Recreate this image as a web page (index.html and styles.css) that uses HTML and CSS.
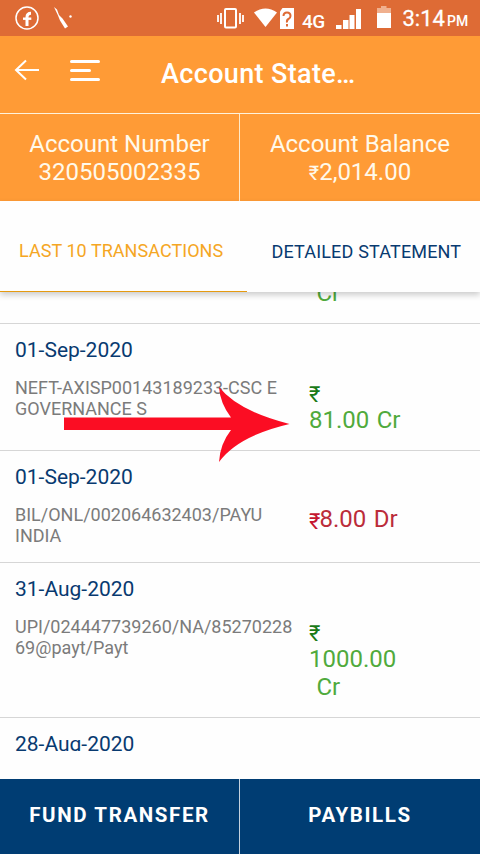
FILE: index.html
```html
<!DOCTYPE html>
<html lang="en">
<head>
<meta charset="utf-8">
<title>Account Statement</title>
<link rel="stylesheet" href="styles.css">
</head>
<body>
<div class="status">
  <svg class="status-left" width="80" height="36" viewBox="0 0 80 36">
    <circle cx="27" cy="18" r="11" fill="none" stroke="#fff" stroke-width="1.5"/>
    <path d="M27 26V17.2Q27 13.2 31 13.2" fill="none" stroke="#fff" stroke-width="3"/>
    <path d="M23 18.7H31.3" stroke="#fff" stroke-width="2.4"/>
    <path d="M54 7L57 9.5L59 15L62.500 18.500L68 26.500L65 28.500L60 20.500L58 15.500Z" fill="#fff"/>
    <circle cx="70.500" cy="16.500" r="1.200" fill="#fff"/>
  </svg>
  <svg class="status-net" width="86" height="36" viewBox="0 0 86 36">
    <rect x="9" y="9" width="11" height="18.500" rx="1" fill="none" stroke="#fff" stroke-width="2"/>
    <path d="M2 15V22M5 13V24M24 13V24M27 15V22" stroke="#fff" stroke-width="1.800"/>
    <path d="M38 12.500Q49.500 4.500 61 12.500L49.500 27Z" fill="#fff"/>
    <path d="M66.500 8H78V29H64V11.500Z" fill="#fff"/>
    <path d="M67.500 16Q67.500 12.500 71 12.500T74.500 16Q74.500 18 72.500 19T71 22.500M71 24V26.500" fill="none" stroke="#de6b35" stroke-width="2"/>
  </svg>
  <span class="lte">4G</span>
  <svg class="status-bars" width="60" height="36" viewBox="0 0 60 36">
    <path d="M0 25H5.500V29H0ZM7 20H12.500V29H7ZM13.500 15H18.500V29H13.500ZM20 9H25V29H20Z" fill="#fff"/>
    <path d="M41 8H45V6H50.500V8H55V13H41Z" fill="#f0b08e"/>
    <path d="M41 13H55V28H41Z" fill="#fff"/>
  </svg>
  <span class="clock">3:14</span><span class="meridiem">PM</span>
</div>
<header class="appbar">
  <svg class="nav" width="110" height="76" viewBox="0 0 110 76">
    <path d="M39 34H16.500M26 24.500L16 34L26 43.500" fill="none" stroke="#fff" stroke-width="2"/>
    <path d="M71.500 25.500H98.500M71.500 34.500H89.500M71.500 43.500H98.500" fill="none" stroke="#fff" stroke-width="3" stroke-linecap="round"/>
  </svg>
  <h1 class="title">Account State…</h1>
</header>
<section class="summary">
  <div class="fact"><div>Account Number</div><div>320505002335</div></div>
  <div class="fact"><div>Account Balance</div><div><span class="rupee-small">₹</span>2,014.00</div></div>
</section>
<nav class="tabs">
  <div class="tab active">LAST 10 TRANSACTIONS</div>
  <div class="tab">DETAILED STATEMENT</div>
</nav>
<main class="list">
  <div class="row partial"><div class="amount credit">&nbsp;Cr</div></div>
  <div class="row">
    <div class="date">01-Sep-2020</div>
    <div class="desc">NEFT-AXISP00143189233-CSC E GOVERNANCE S</div>
    <div class="amount credit"><span class="rupee">₹</span><br>81.00 Cr</div>
  </div>
  <div class="row">
    <div class="date">01-Sep-2020</div>
    <div class="desc">BIL/ONL/002064632403/PAYU<br>INDIA</div>
    <div class="amount debit"><span class="rupee">₹</span>8.00 Dr</div>
  </div>
  <div class="row">
    <div class="date">31-Aug-2020</div>
    <div class="desc">UPI/024447739260/NA/85270228<br>69@payt/Payt</div>
    <div class="amount credit"><span class="rupee">₹</span><br>1000.00<br>&nbsp;Cr</div>
  </div>
  <div class="row last"><div class="date">28-Aug-2020</div></div>
</main>
<footer class="actions">
  <div class="action">FUND TRANSFER</div>
  <div class="action">PAYBILLS</div>
</footer>
<svg class="arrow" width="226" height="76" viewBox="0 0 226 76">
  <path d="M0 31.500H167Q156 17 155 1Q174 25 225.500 38Q174 50 155 76Q156 58 167 44H0Z" fill="#fb0d23"/>
</svg>
</body>
</html>
```

FILE: styles.css
```css
* { box-sizing: border-box; }
body {
  margin: 0;
  width: 480px;
  height: 854px;
  position: relative;
  overflow: hidden;
  display: flex;
  flex-direction: column;
  background: #fefefe;
  font-family: Roboto, "Noto Sans", sans-serif;
}
svg { display: block; flex: none; }
.status {
  height: 36px;
  flex: none;
  display: flex;
  background: #de6b35;
  color: #fff;
  line-height: 36px;
  white-space: nowrap;
}
.status-net { margin-left: 136px; }
.lte { width: 34px; flex: none; font-size: 19px; font-weight: 500; padding-top: 4px; letter-spacing: -.5px; }
.status-bars { margin-right: 6px; }
.clock { font-size: 22px; font-weight: 400; -webkit-text-stroke: .3px #fff; padding-top: 1px; width: 44px; padding-left: .5px; }
.meridiem { font-size: 14px; font-weight: 500; padding-top: 3px; padding-left: 1px; }
.appbar { height: 77px; flex: none; display: flex; background: #ff9b36; color: #fff; }
.title { margin: 0 0 0 51px; font-size: 27px; font-weight: 500; line-height: 77px; letter-spacing: .35px; }
.summary {
  height: 88px;
  flex: none;
  display: grid;
  grid-template-columns: 240px 240px;
  background: #ff9b36;
  border-top: 1px solid #fff3dc;
  color: #fff9ea;
  font-size: 24px;
  line-height: 28px;
  text-align: center;
}
.fact { padding-top: 16px; }
.fact:first-child { border-right: 1px solid #ffe9c8; }
.rupee-small { font-size: 20px; line-height: 20px; }
.tabs {
  height: 91px;
  flex: none;
  display: grid;
  grid-template-columns: 247px 233px;
  background: #fefefe;
  color: #083a70;
  font-size: 18px;
  line-height: 90px;
  letter-spacing: .17px;
  box-shadow: 0 3px 6px rgba(0, 0, 0, .2);
  z-index: 1;
}
.tab { height: 91px; padding: 6px 0 0 24.500px; white-space: nowrap; }
.tab.active { padding: 5px 0 0 19px; color: #f5a623; letter-spacing: .05px; border-bottom: 1px solid #e59a10; }
.list { height: 459px; flex: none; overflow: hidden; }
.row {
  display: grid;
  grid-template-columns: 294px 1fr;
  grid-template-rows: 39px auto;
  padding: 14px 0 16px 15px;
  border-bottom: 1px solid #d6d6d6;
}
.partial { height: 32px; grid-template-rows: auto; align-content: end; padding-top: 0; }
.last { border: 0; }
.date { grid-column: 1; color: #083a70; font-size: 21px; line-height: 25px; }
.desc { grid-column: 1; grid-row: 2; color: #7b7b7b; font-size: 18px; line-height: 21px; padding-right: 14px; }
.amount { grid-column: 2; grid-row: 2; padding: .5px 0; font-size: 24px; line-height: 28px; word-spacing: 1.500px; white-space: nowrap; }
.partial .amount { grid-row: 1; }
.credit { color: #50aa3c; }
.debit { color: #bb2c3a; }
.rupee { display: inline-block; width: 10.500px; font-size: 22px; line-height: 20px; transform: translateY(1.500px); }
.credit .rupee { color: #197a18; }
.debit .rupee { color: #c51630; }
.actions {
  height: 75px;
  flex: none;
  margin-top: 28px;
  display: grid;
  grid-template-columns: 240px 240px;
  background: #003d73;
  color: #fff;
  font-size: 20.500px;
  font-weight: 700;
  letter-spacing: 1.600px;
  line-height: 72px;
  text-align: center;
}
.action:first-child { border-right: 1px solid #c5d2de; }
.arrow { position: absolute; left: 64px; top: 386px; z-index: 2; }
```
